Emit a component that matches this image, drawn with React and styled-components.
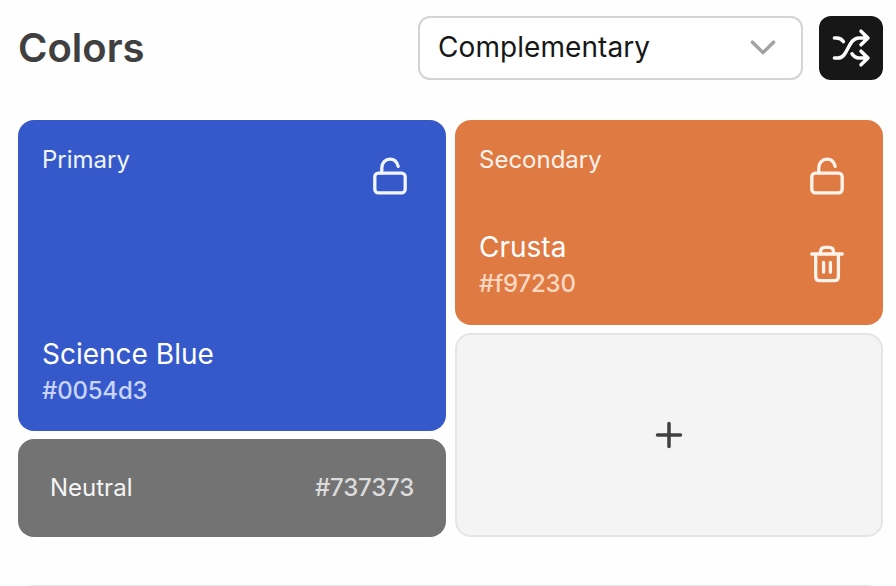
import React from "react";
import styled, { createGlobalStyle } from "styled-components";

const GlobalStyle = createGlobalStyle`
  *, *::before, *::after { box-sizing: border-box; }
  body {
    margin: 0;
    background: #fefefe;
    overflow: hidden;
    font-family: Inter, "Liberation Sans", sans-serif;
  }
  button { font: inherit; padding: 0; border: 0; background: none; cursor: pointer; }
`;

const Page = styled.main`
  height: 586px;
  padding: 16px 13px 0 18px;
  overflow: hidden;
`;

const Header = styled.header`
  display: flex;
  align-items: center;
  height: 64px;
  margin-bottom: 40px;
`;

const Title = styled.h1`
  flex: 1;
  margin: 0;
  font-size: 40px;
  line-height: 48px;
  font-weight: 600;
  color: #404040;
`;

const Select = styled.button`
  display: flex;
  align-items: center;
  justify-content: space-between;
  width: 385px;
  height: 64px;
  margin-right: 16px;
  padding: 0 25px 2px 18px;
  border: 2px solid #d4d4d4;
  border-radius: 12px;
  background: #fff;
  font-size: 28px;
  letter-spacing: 0.07px;
  color: #171717;
`;

const ShuffleButton = styled.button`
  display: grid;
  place-items: center;
  width: 64px;
  height: 64px;
  border-radius: 12px;
  background: #171717;
`;

const Palette = styled.section`
  display: grid;
  grid-template-columns: 428px 428px;
  column-gap: 9px;
  height: 417px;
`;

const Column = styled.div`
  display: grid;
  grid-template-rows: ${({ $rows }) => $rows};
  row-gap: 8px;
`;

const Swatch = styled.article`
  display: flex;
  justify-content: space-between;
  padding: 24px 36px ${({ $compact }) => ($compact ? 25 : 24)}px 24px;
  border-radius: 16px;
  background: ${({ $color }) => $color};
  color: #fff;
`;

const Details = styled.div`
  display: flex;
  flex-direction: column;
`;

const Label = styled.span`
  font-size: 24px;
  line-height: 32px;
  color: ${({ $tone }) => $tone};
`;

const Name = styled.span`
  margin-top: auto;
  margin-bottom: 1px;
  font-size: 28px;
  line-height: 40px;
`;

const Hex = styled.span`
  font-size: 24px;
  line-height: 32px;
  font-weight: 500;
  letter-spacing: -0.2px;
  color: ${({ $tone }) => $tone};
`;

const Actions = styled.div`
  display: flex;
  flex-direction: column;
  gap: 48px;
  padding-top: 12px;
`;

const IconButton = styled.button`
  width: 40px;
  height: 40px;
  color: ${({ $tone }) => $tone};
`;

const NeutralBar = styled.article`
  display: flex;
  align-items: center;
  justify-content: space-between;
  padding: 0 32px;
  border-radius: 16px;
  background: #737373;
`;

const AddTile = styled.button`
  display: grid;
  place-items: center;
  border: 2px solid #e5e5e5;
  border-radius: 16px;
  background: #f4f4f4;
`;

const NextPanel = styled.section`
  height: 80px;
  margin-top: 48px;
  border: 2px solid #e5e5e5;
  border-radius: 16px;
`;

const Glyph = styled.svg`
  display: block;
  fill: none;
  stroke: currentColor;
  stroke-linecap: round;
  stroke-linejoin: round;
`;

const Chevron = () => (
  <Glyph width="26" height="16" viewBox="0 0 26 16" strokeWidth="3.5" color="#a3a3a3">
    <path d="M2.5 3.2 13 13.6 23.5 3.2" />
  </Glyph>
);

const Shuffle = () => (
  <Glyph width="40" height="40" viewBox="0 0 40 40" strokeWidth="3.5" color="#fff">
    <path d="M3.4 10H5.5Q10 10 12.4 13.6" />
    <path d="M3.4 30H7C17.5 30 16.5 10 28 10H37M30 3.2 37 10 30 16.8" />
    <path d="M21 25.8Q23.8 30 28 30H37M30 23.2 37 30 30 36.8" />
  </Glyph>
);

const Unlock = () => (
  <Glyph width="40" height="40" viewBox="0 0 40 40" strokeWidth="3.3">
    <rect x="4.8" y="17.2" width="30.4" height="19.6" rx="3.5" />
    <path d="M11.8 17V12C11.8 7 15.4 3.2 20 3.2C24.2 3.2 27 6 28.2 10.4" />
  </Glyph>
);

const Trash = () => (
  <Glyph width="40" height="40" viewBox="0 0 40 40" strokeWidth="3.3">
    <path d="M4.7 10H35.3M8.7 10V32.7Q8.7 36.6 12.8 36.6H27.3Q31.4 36.6 31.4 32.7V10" />
    <path d="M13.5 9.8V8Q13.5 3.3 18 3.3H22Q26.5 3.3 26.5 8V9.8M16.6 18.5V28.2M23.4 18.5V28.2" />
  </Glyph>
);

const Plus = () => (
  <Glyph width="40" height="40" viewBox="0 0 40 40" strokeWidth="3.5" color="#404040">
    <path d="M8.5 20H31.5M20 8.5V31.5" />
  </Glyph>
);

function ColorSwatch({ color, label, name, hex, hexTone, tone, removable }) {
  return (
    <Swatch $color={color} $compact={removable}>
      <Details>
        <Label $tone={tone}>{label}</Label>
        <Name>{name}</Name>
        <Hex $tone={hexTone}>{hex}</Hex>
      </Details>
      <Actions>
        <IconButton $tone={tone} aria-label={`Lock ${label}`}><Unlock /></IconButton>
        {removable && (
          <IconButton $tone={tone} aria-label={`Remove ${label}`}><Trash /></IconButton>
        )}
      </Actions>
    </Swatch>
  );
}

export default function App() {
  return (
    <>
      <GlobalStyle />
      <Page>
        <Header>
          <Title>Colors</Title>
          <Select>Complementary<Chevron /></Select>
          <ShuffleButton aria-label="Shuffle colors"><Shuffle /></ShuffleButton>
        </Header>
        <Palette>
          <Column $rows="311px 98px">
            <ColorSwatch color="#3559ca" label="Primary" name="Science Blue" hex="#0054d3" tone="#f0f5ff" hexTone="#c8d4ff" />
            <NeutralBar>
              <Label $tone="#f5f5f5">Neutral</Label>
              <Hex $tone="#dcdcdc">#737373</Hex>
            </NeutralBar>
          </Column>
          <Column $rows="205px 204px">
            <ColorSwatch color="#e07a43" label="Secondary" name="Crusta" hex="#f97230" tone="#fff3ec" hexTone="#ffd8c2" removable />
            <AddTile aria-label="Add color"><Plus /></AddTile>
          </Column>
        </Palette>
        <NextPanel />
      </Page>
    </>
  );
}
